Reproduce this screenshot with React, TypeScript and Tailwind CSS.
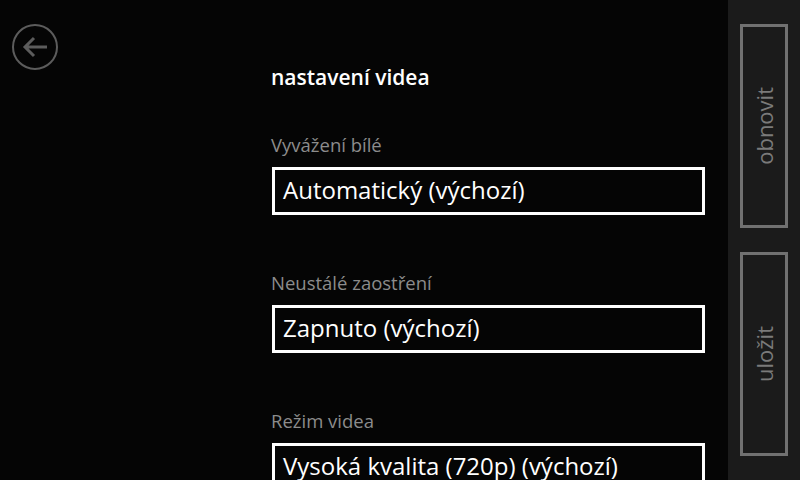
import React from "react";

type Setting = {
  label: string;
  value: string;
};

const settings: Setting[] = [
  { label: "Vyvážení bílé", value: "Automatický (výchozí)" },
  { label: "Neustálé zaostření", value: "Zapnuto (výchozí)" },
  { label: "Režim videa", value: "Vysoká kvalita (720p) (výchozí)" },
];

function BackButton() {
  return (
    <svg width="48" height="48" viewBox="0 0 48 48" className="shrink-0">
      <circle cx="24" cy="24" r="22" fill="none" stroke="#5c5c5c" strokeWidth="2" />
      <path d="M14 24h22M23 15l-9 9 9 9" fill="none" stroke="#5c5c5c" strokeWidth="3" />
    </svg>
  );
}

function SideButton({ label }: { label: string }) {
  return (
    <div className="flex h-[204px] w-[48px] items-center justify-center border-[3px] border-[#717171]">
      <span className="rotate-180 text-[22px] leading-none text-[#7a7a7a] [writing-mode:vertical-rl]">
        {label}
      </span>
    </div>
  );
}

export default function App() {
  return (
    <div
      className="flex h-[480px] w-[800px] overflow-hidden bg-[#050505]"
      style={{ fontFamily: "'Open Sans', 'Noto Sans', sans-serif" }}
    >
      <div className="w-[271px] shrink-0 pl-[11px] pt-[23px]">
        <BackButton />
      </div>

      <div className="flex-1 pt-[63px]">
        <h1 className="text-[21px] font-semibold leading-[28px] text-white">nastavení videa</h1>

        <div className="mt-[44px] flex flex-col gap-[58px]">
          {settings.map((s) => (
            <div key={s.label}>
              <div className="text-[18.5px] leading-[20px] text-[#8c8c8c]">{s.label}</div>
              <div className="mr-[23px] ml-px mt-[12px] flex h-[48px] items-center border-[3px] border-white px-[8px] pb-[3px]">
                <span className="whitespace-nowrap text-[24px] leading-none text-white">{s.value}</span>
              </div>
            </div>
          ))}
        </div>
      </div>

      <div className="flex w-[72px] shrink-0 flex-col gap-[24px] bg-[#1b1b1b] pl-[12px] pt-[24px]">
        <SideButton label="obnovit" />
        <SideButton label="uložit" />
      </div>
    </div>
  );
}
